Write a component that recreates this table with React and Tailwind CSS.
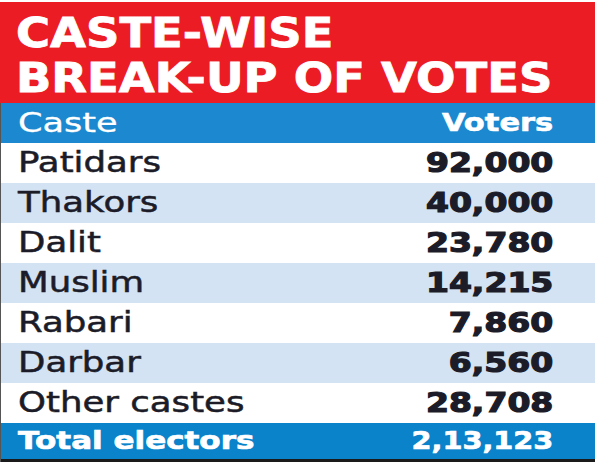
import React from "react";

const rows = [
  { caste: "Patidars", voters: "92,000" },
  { caste: "Thakors", voters: "40,000" },
  { caste: "Dalit", voters: "23,780" },
  { caste: "Muslim", voters: "14,215" },
  { caste: "Rabari", voters: "7,860" },
  { caste: "Darbar", voters: "6,560" },
  { caste: "Other castes", voters: "28,708" },
];

function App() {
  return (
    <div className="w-[600px] h-[471px] bg-white pt-[2px] font-['DejaVu_Sans',sans-serif]">
      <div className="w-[595px]">
        <div className="bg-[#ec1c24] pl-[16px] pt-[9px] pb-[2px] h-[101px]">
          <h1 className="inline-block origin-left scale-x-[1.16] text-white font-bold text-[40px] leading-[45px] whitespace-nowrap [-webkit-text-stroke:0.8px_white]">
            CASTE-WISE
            <br />
            BREAK-UP OF VOTES
          </h1>
        </div>
        <div className="border-l border-[#555]">
          <div className="h-10 bg-[#1b88cf] flex items-center justify-between pl-[17px] pr-[42px]">
            <span className="inline-block origin-left scale-x-[1.35] text-white text-[26px] [-webkit-text-stroke:0.3px_white]">
              Caste
            </span>
            <span className="inline-block origin-right scale-x-[1.22] text-white font-bold text-[25px] [-webkit-text-stroke:0.6px_white]">
              Voters
            </span>
          </div>
          {rows.map((r, i) => (
            <div
              key={r.caste}
              className={
                "h-10 flex items-center justify-between pl-[17px] pr-[42px] " +
                (i % 2 === 1 ? "bg-[#d3e3f3]" : "bg-white")
              }
            >
              <span className="inline-block origin-left scale-x-[1.27] text-[#1c1c28] text-[28px] [-webkit-text-stroke:0.5px_#1c1c28]">
                {r.caste}
              </span>
              <span className="inline-block origin-right scale-x-[1.27] text-[#1c1c28] font-bold text-[26px] [-webkit-text-stroke:1.2px_#1c1c28]">
                {r.voters}
              </span>
            </div>
          ))}
          <div className="h-[39px] bg-[#0a83cb] flex items-center justify-between pl-[17px] pr-[42px] border-b-[3px] border-[#1a1a1a]">
            <span className="inline-block origin-left scale-x-[1.24] text-white font-bold text-[25px] [-webkit-text-stroke:0.7px_white]">
              Total electors
            </span>
            <span className="inline-block origin-right scale-x-[1.15] text-white font-bold text-[25px] [-webkit-text-stroke:0.7px_white]">
              2,13,123
            </span>
          </div>
        </div>
      </div>
    </div>
  );
}

export default App;
